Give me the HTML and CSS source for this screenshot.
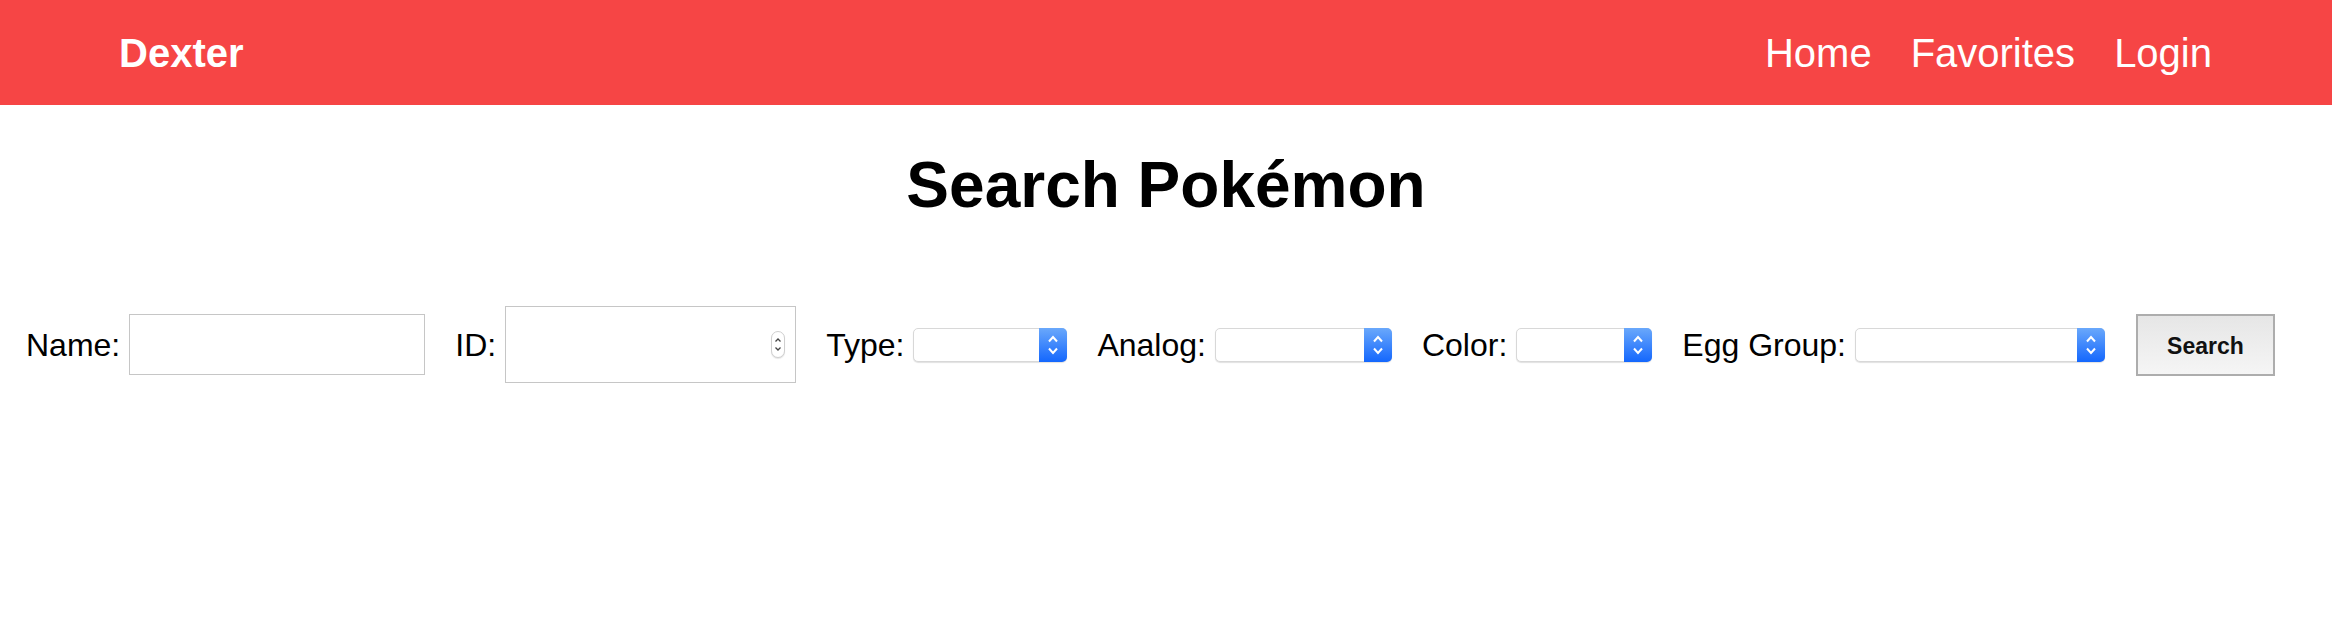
FILE: index.html
```html
<!DOCTYPE html>
<html lang="en">
<head>
<meta charset="utf-8">
<title>Dexter</title>
<link rel="stylesheet" href="styles.css">
</head>
<body>
<header class="navbar">
  <a class="brand" href="#">Dexter</a>
  <nav class="nav-links">
    <a href="#">Home</a>
    <a href="#">Favorites</a>
    <a href="#">Login</a>
  </nav>
</header>
<main>
  <h1 class="title">Search Pokémon</h1>
  <form class="search-form">
    <label class="field">Name:<input class="text-input name-input" type="text"></label>
    <label class="field">ID:<span class="num-wrap"><input class="text-input id-input" type="number"><span class="spinner"><svg width="12" height="25" viewBox="0 0 12 25"><path d="M3.5 9.5 L6 7 L8.5 9.5" fill="none" stroke="#444" stroke-width="1.3"/><path d="M3.5 15.5 L6 18 L8.5 15.5" fill="none" stroke="#444" stroke-width="1.3"/></svg></span></span></label>
    <label class="field">Type:<span class="select-wrap w-type"><select><option></option></select><span class="arrow"><svg width="14" height="34" viewBox="0 0 14 34"><path d="M3 13.5 L7 9 L11 13.5" fill="none" stroke="#fff" stroke-width="2"/><path d="M3 20.5 L7 25 L11 20.5" fill="none" stroke="#fff" stroke-width="2"/></svg></span></span></label>
    <label class="field">Analog:<span class="select-wrap w-analog"><select><option></option></select><span class="arrow"><svg width="14" height="34" viewBox="0 0 14 34"><path d="M3 13.5 L7 9 L11 13.5" fill="none" stroke="#fff" stroke-width="2"/><path d="M3 20.5 L7 25 L11 20.5" fill="none" stroke="#fff" stroke-width="2"/></svg></span></span></label>
    <label class="field">Color:<span class="select-wrap w-color"><select><option></option></select><span class="arrow"><svg width="14" height="34" viewBox="0 0 14 34"><path d="M3 13.5 L7 9 L11 13.5" fill="none" stroke="#fff" stroke-width="2"/><path d="M3 20.5 L7 25 L11 20.5" fill="none" stroke="#fff" stroke-width="2"/></svg></span></span></label>
    <label class="field">Egg Group:<span class="select-wrap w-egg"><select><option></option></select><span class="arrow"><svg width="14" height="34" viewBox="0 0 14 34"><path d="M3 13.5 L7 9 L11 13.5" fill="none" stroke="#fff" stroke-width="2"/><path d="M3 20.5 L7 25 L11 20.5" fill="none" stroke="#fff" stroke-width="2"/></svg></span></span></label>
    <button class="search-btn" type="button">Search</button>
  </form>
</main>
</body>
</html>
```
FILE: styles.css
```css
html, body {
  margin: 0;
  padding: 0;
  background: #ffffff;
  font-family: "Liberation Sans", Arial, Helvetica, sans-serif;
  color: #000;
}

.navbar {
  height: 105px;
  background: #f64545;
  display: flex;
  align-items: center;
  justify-content: space-between;
  padding: 0 120px 0 119px;
  box-sizing: border-box;
}

.brand {
  color: #fff;
  font-size: 40px;
  font-weight: bold;
  text-decoration: none;
  line-height: 1;
}

.nav-links {
  display: flex;
  gap: 39px;
}

.nav-links a {
  color: #fff;
  font-size: 40px;
  text-decoration: none;
  line-height: 1;
}

.title {
  margin: 48px 0 0;
  text-align: center;
  font-size: 64px;
  line-height: 64px;
  font-weight: bold;
}

.search-form {
  display: flex;
  align-items: center;
  gap: 30px;
  margin-top: 89px;
  padding-left: 26px;
  height: 77px;
}

.field {
  display: flex;
  align-items: center;
  gap: 9px;
  font-size: 32px;
  line-height: 32px;
}

.text-input {
  box-sizing: border-box;
  border: 1px solid #c6c6c6;
  border-radius: 0;
  background: #fff;
  outline: none;
  padding: 0 6px;
  font-size: 24px;
  margin: 0;
}

.name-input {
  width: 296px;
  height: 61px;
}

.num-wrap {
  position: relative;
  display: block;
}

.id-input {
  width: 291px;
  height: 77px;
  display: block;
  -moz-appearance: textfield;
  appearance: textfield;
}

.id-input::-webkit-inner-spin-button,
.id-input::-webkit-outer-spin-button {
  -webkit-appearance: none;
  margin: 0;
}

.spinner {
  position: absolute;
  right: 11px;
  top: 25px;
  width: 14px;
  height: 27px;
  box-sizing: border-box;
  border: 1px solid #cfcfcf;
  border-radius: 7px;
  background: #fff;
  display: flex;
  align-items: center;
  justify-content: center;
  box-shadow: 0 1px 1px rgba(0,0,0,0.1);
}

.select-wrap {
  position: relative;
  display: block;
  height: 34px;
}

.select-wrap select {
  -webkit-appearance: none;
  appearance: none;
  box-sizing: border-box;
  width: 100%;
  height: 34px;
  margin: 0;
  border: 1px solid #d8d8d8;
  border-radius: 5px;
  background: #fff;
  box-shadow: 0 1px 1px rgba(0,0,0,0.12);
  outline: none;
  display: block;
}

.select-wrap .arrow {
  position: absolute;
  right: 0;
  top: 0;
  width: 28px;
  height: 34px;
  border-radius: 0 5px 5px 0;
  background: linear-gradient(#6aa8fb, #1467fd);
  display: flex;
  align-items: center;
  justify-content: center;
}

.w-type { width: 154px; }
.w-analog { width: 177px; }
.w-color { width: 136px; }
.w-egg { width: 250px; }

.search-btn {
  box-sizing: border-box;
  width: 139px;
  height: 62px;
  border: 2px solid #adadad;
  border-radius: 0;
  background: linear-gradient(#e6e6e6, #f5f5f5);
  font-family: "Liberation Sans", Arial, Helvetica, sans-serif;
  font-weight: bold;
  font-size: 23px;
  color: #111;
  margin: 0 0 0 1px;
  padding: 3px 0 0;
}
```
